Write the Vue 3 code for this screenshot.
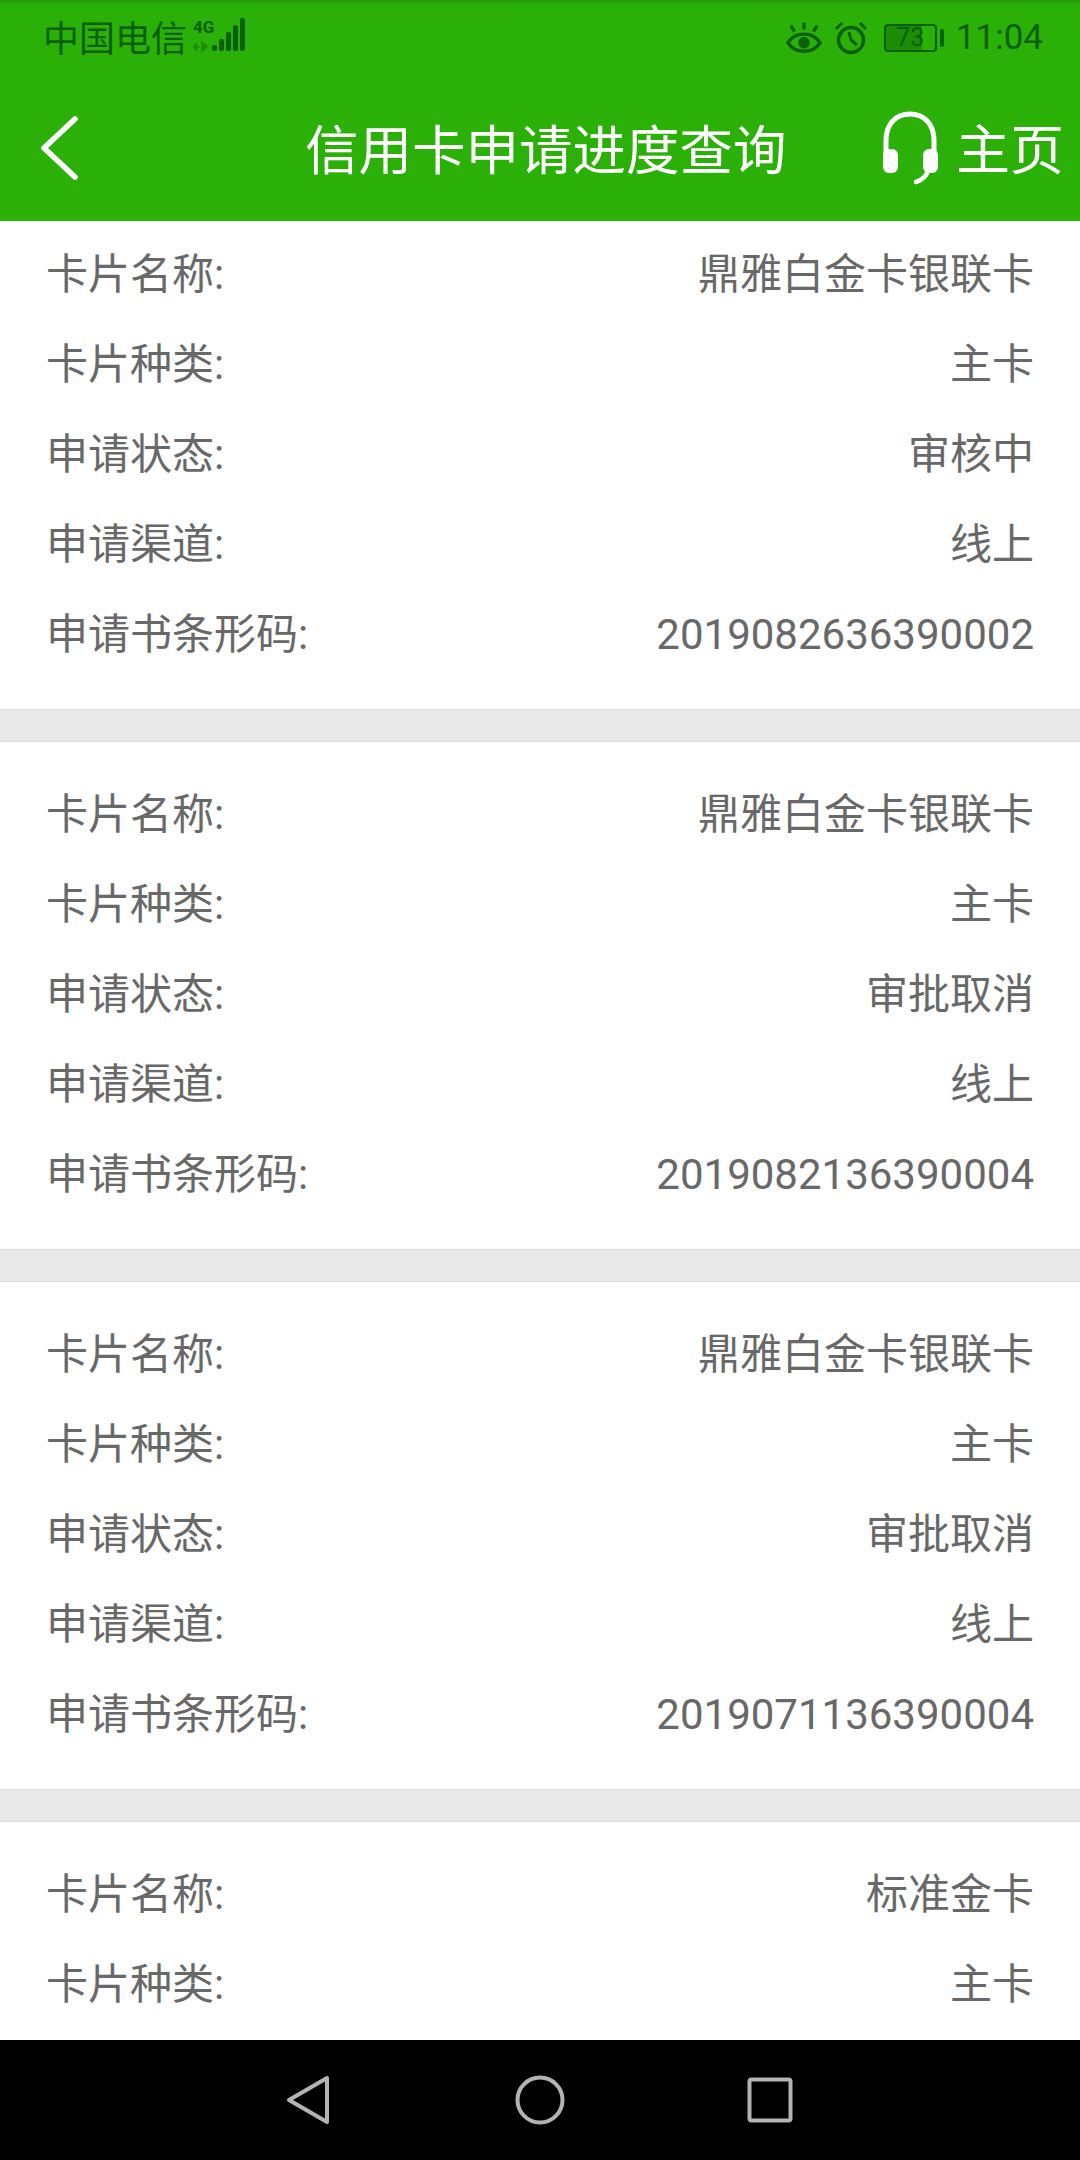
<script setup>
const cards = [
  { name: '鼎雅白金卡银联卡', type: '主卡', status: '审核中', channel: '线上', code: '2019082636390002' },
  { name: '鼎雅白金卡银联卡', type: '主卡', status: '审批取消', channel: '线上', code: '2019082136390004' },
  { name: '鼎雅白金卡银联卡', type: '主卡', status: '审批取消', channel: '线上', code: '2019071136390004' },
  { name: '标准金卡', type: '主卡' }
]

function rowsOf(card) {
  return [
    ['卡片名称:', card.name],
    ['卡片种类:', card.type],
    ['申请状态:', card.status],
    ['申请渠道:', card.channel],
    ['申请书条形码:', card.code]
  ].filter((row) => row[1])
}
</script>

<template>
  <div class="phone">
    <header class="top">
      <div class="status-bar">
        <span class="carrier">中国电信</span>
        <svg class="signal" width="54" height="38" viewBox="0 0 54 38">
          <text x="0" y="17" class="net">4G</text>
          <path d="M1 31h6M4 27l-3 4 3 4M9 26v9l5-4.500z" fill="#0b5f05" stroke="#0b5f05" stroke-width="1.500" opacity=".45" />
          <rect x="19" y="29" width="5" height="6" rx="2" fill="#0b5f05" />
          <rect x="26" y="23" width="5" height="12" rx="2" fill="#0b5f05" />
          <rect x="33" y="16" width="5" height="19" rx="2" fill="#0b5f05" />
          <rect x="40" y="9" width="5" height="26" rx="2" fill="#0b5f05" />
          <rect x="47" y="2" width="5" height="33" rx="2" fill="#0b5f05" />
        </svg>
        <div class="status-right">
          <svg width="36" height="34" viewBox="0 0 38 34" fill="none" stroke="#0b5f05" stroke-width="3.500">
            <path d="M2 22c4-6 10-9 17-9s13 3 17 9c-4 6-10 9-17 9s-13-3-17-9z" />
            <circle cx="19" cy="22" r="6" fill="#0b5f05" stroke="none" />
            <path d="M19 1v7M5 4l4 6M33 4l-4 6" />
          </svg>
          <svg width="34" height="34" viewBox="0 0 34 34" fill="none" stroke="#0b5f05" stroke-width="3.500">
            <circle cx="17" cy="19" r="12.500" />
            <path d="M15 11l2 8 6 5" stroke-width="3" />
            <path d="M2 8l6-6M32 8l-6-6" stroke-width="3" />
          </svg>
          <div class="battery">
            <div class="battery-box">
              <div class="battery-fill" :style="{ width: '73%' }"></div>
              <span class="battery-num">73</span>
            </div>
            <div class="battery-tip"></div>
          </div>
          <span class="time">11:04</span>
        </div>
      </div>
      <div class="title-bar">
        <svg class="back" width="38" height="64" viewBox="0 0 38 64" fill="none" stroke="#fff" stroke-width="5.500" stroke-linecap="round">
          <path d="M34 3L3 32l31 29" />
        </svg>
        <h1 class="title">信用卡申请进度查询</h1>
        <svg class="headset" width="56" height="74" viewBox="0 0 56 74" fill="#fff">
          <path d="M4 42V29C4 13 14 3 28 3s24 10 24 26v13" fill="none" stroke="#fff" stroke-width="5" />
          <rect x="1" y="38" width="15" height="24" rx="6" />
          <rect x="41" y="38" width="15" height="24" rx="6" />
          <path d="M46 60c-2 6-6 9-12 11" fill="none" stroke="#fff" stroke-width="4.500" stroke-linecap="round" />
        </svg>
        <span class="home">主页</span>
      </div>
    </header>

    <main class="list">
      <section v-for="(card, i) in cards" :key="i" class="card">
        <div v-for="row in rowsOf(card)" :key="row[0]" class="row">
          <span>{{ row[0] }}</span>
          <span>{{ row[1] }}</span>
        </div>
      </section>
    </main>

    <nav class="nav">
      <svg width="44" height="50" viewBox="0 0 44 50" fill="none" stroke="#b3b3b3" stroke-width="4" stroke-linejoin="round">
        <path d="M41 3v44L3 25z" />
      </svg>
      <svg width="50" height="50" viewBox="0 0 50 50" fill="none" stroke="#b3b3b3" stroke-width="4">
        <circle cx="25" cy="25" r="22.500" />
      </svg>
      <svg class="square" width="46" height="46" viewBox="0 0 46 46" fill="none" stroke="#b3b3b3" stroke-width="4" stroke-linejoin="round">
        <rect x="2.500" y="2.500" width="41" height="41" rx="2" />
      </svg>
    </nav>
  </div>
</template>

<style scoped>
.phone {
  width: 1080px;
  height: 2160px;
  display: flex;
  flex-direction: column;
  overflow: hidden;
  background: #e8e9e8;
  font-family: Roboto, "Noto Sans CJK SC", sans-serif;
}

.top {
  height: 221px;
  flex: none;
  background: #2ab007;
  background-image: linear-gradient(#239a06 0, #2ab007 6px);
}

.status-bar {
  height: 76px;
  display: flex;
  align-items: center;
  padding: 0 37px 0 43px;
  color: #0b5f05;
}

.carrier {
  font-size: 36px;
  line-height: 76px;
  margin-top: 4px;
}

.signal {
  margin-left: 6px;
  margin-top: -6px;
}

.net {
  font-size: 17px;
  font-weight: 700;
  fill: #0b5f05;
}

.status-right {
  margin-left: auto;
  display: flex;
  align-items: center;
  gap: 12px;
}

.battery {
  display: flex;
  align-items: center;
  gap: 3px;
  margin-left: 4px;
}

.battery-box {
  position: relative;
  width: 53px;
  height: 28px;
  box-sizing: border-box;
  border: 2px solid #0b5f05;
  border-radius: 4px;
  overflow: hidden;
}

.battery-fill {
  height: 100%;
  background: rgba(11, 95, 5, 0.45);
}

.battery-num {
  position: absolute;
  inset: 0;
  text-align: center;
  font-size: 25px;
  line-height: 24px;
}

.battery-tip {
  width: 4px;
  height: 18px;
  border-radius: 2px;
  background: #0b5f05;
}

.time {
  font-size: 35px;
  line-height: 76px;
}

.title-bar {
  height: 145px;
  display: flex;
  align-items: center;
  padding: 0 16px 0 41px;
  color: #fff;
}

.back {
  flex: none;
  margin-top: -2px;
}

.title {
  margin: -4px 0 0 226px;
  font-size: 53.500px;
  font-weight: 400;
  white-space: nowrap;
}

.headset {
  margin-left: auto;
  margin-top: -2px;
}

.home {
  margin: -4px 0 0 18px;
  font-size: 54px;
}

.list {
  flex: 1;
  min-height: 0;
  overflow: hidden;
}

.card {
  background: #fff;
  padding: 28px 46px 29px;
  border-bottom: 1px solid #d9dad9;
  margin-bottom: 32px;
  box-shadow: 0 -1px 0 #dcdddc;
  color: #686868;
  font-size: 42px;
}

.card:first-child {
  padding-top: 9px;
  box-shadow: none;
}

.row {
  height: 90px;
  line-height: 90px;
  display: flex;
  align-items: baseline;
  justify-content: space-between;
}

.nav {
  height: 120px;
  flex: none;
  background: #000;
  display: flex;
  align-items: center;
  padding-left: 286px;
  gap: 185px;
}

.square {
  margin-left: -3px;
}
</style>

<style>
html, body {
  margin: 0;
  background: #fff;
}
</style>
